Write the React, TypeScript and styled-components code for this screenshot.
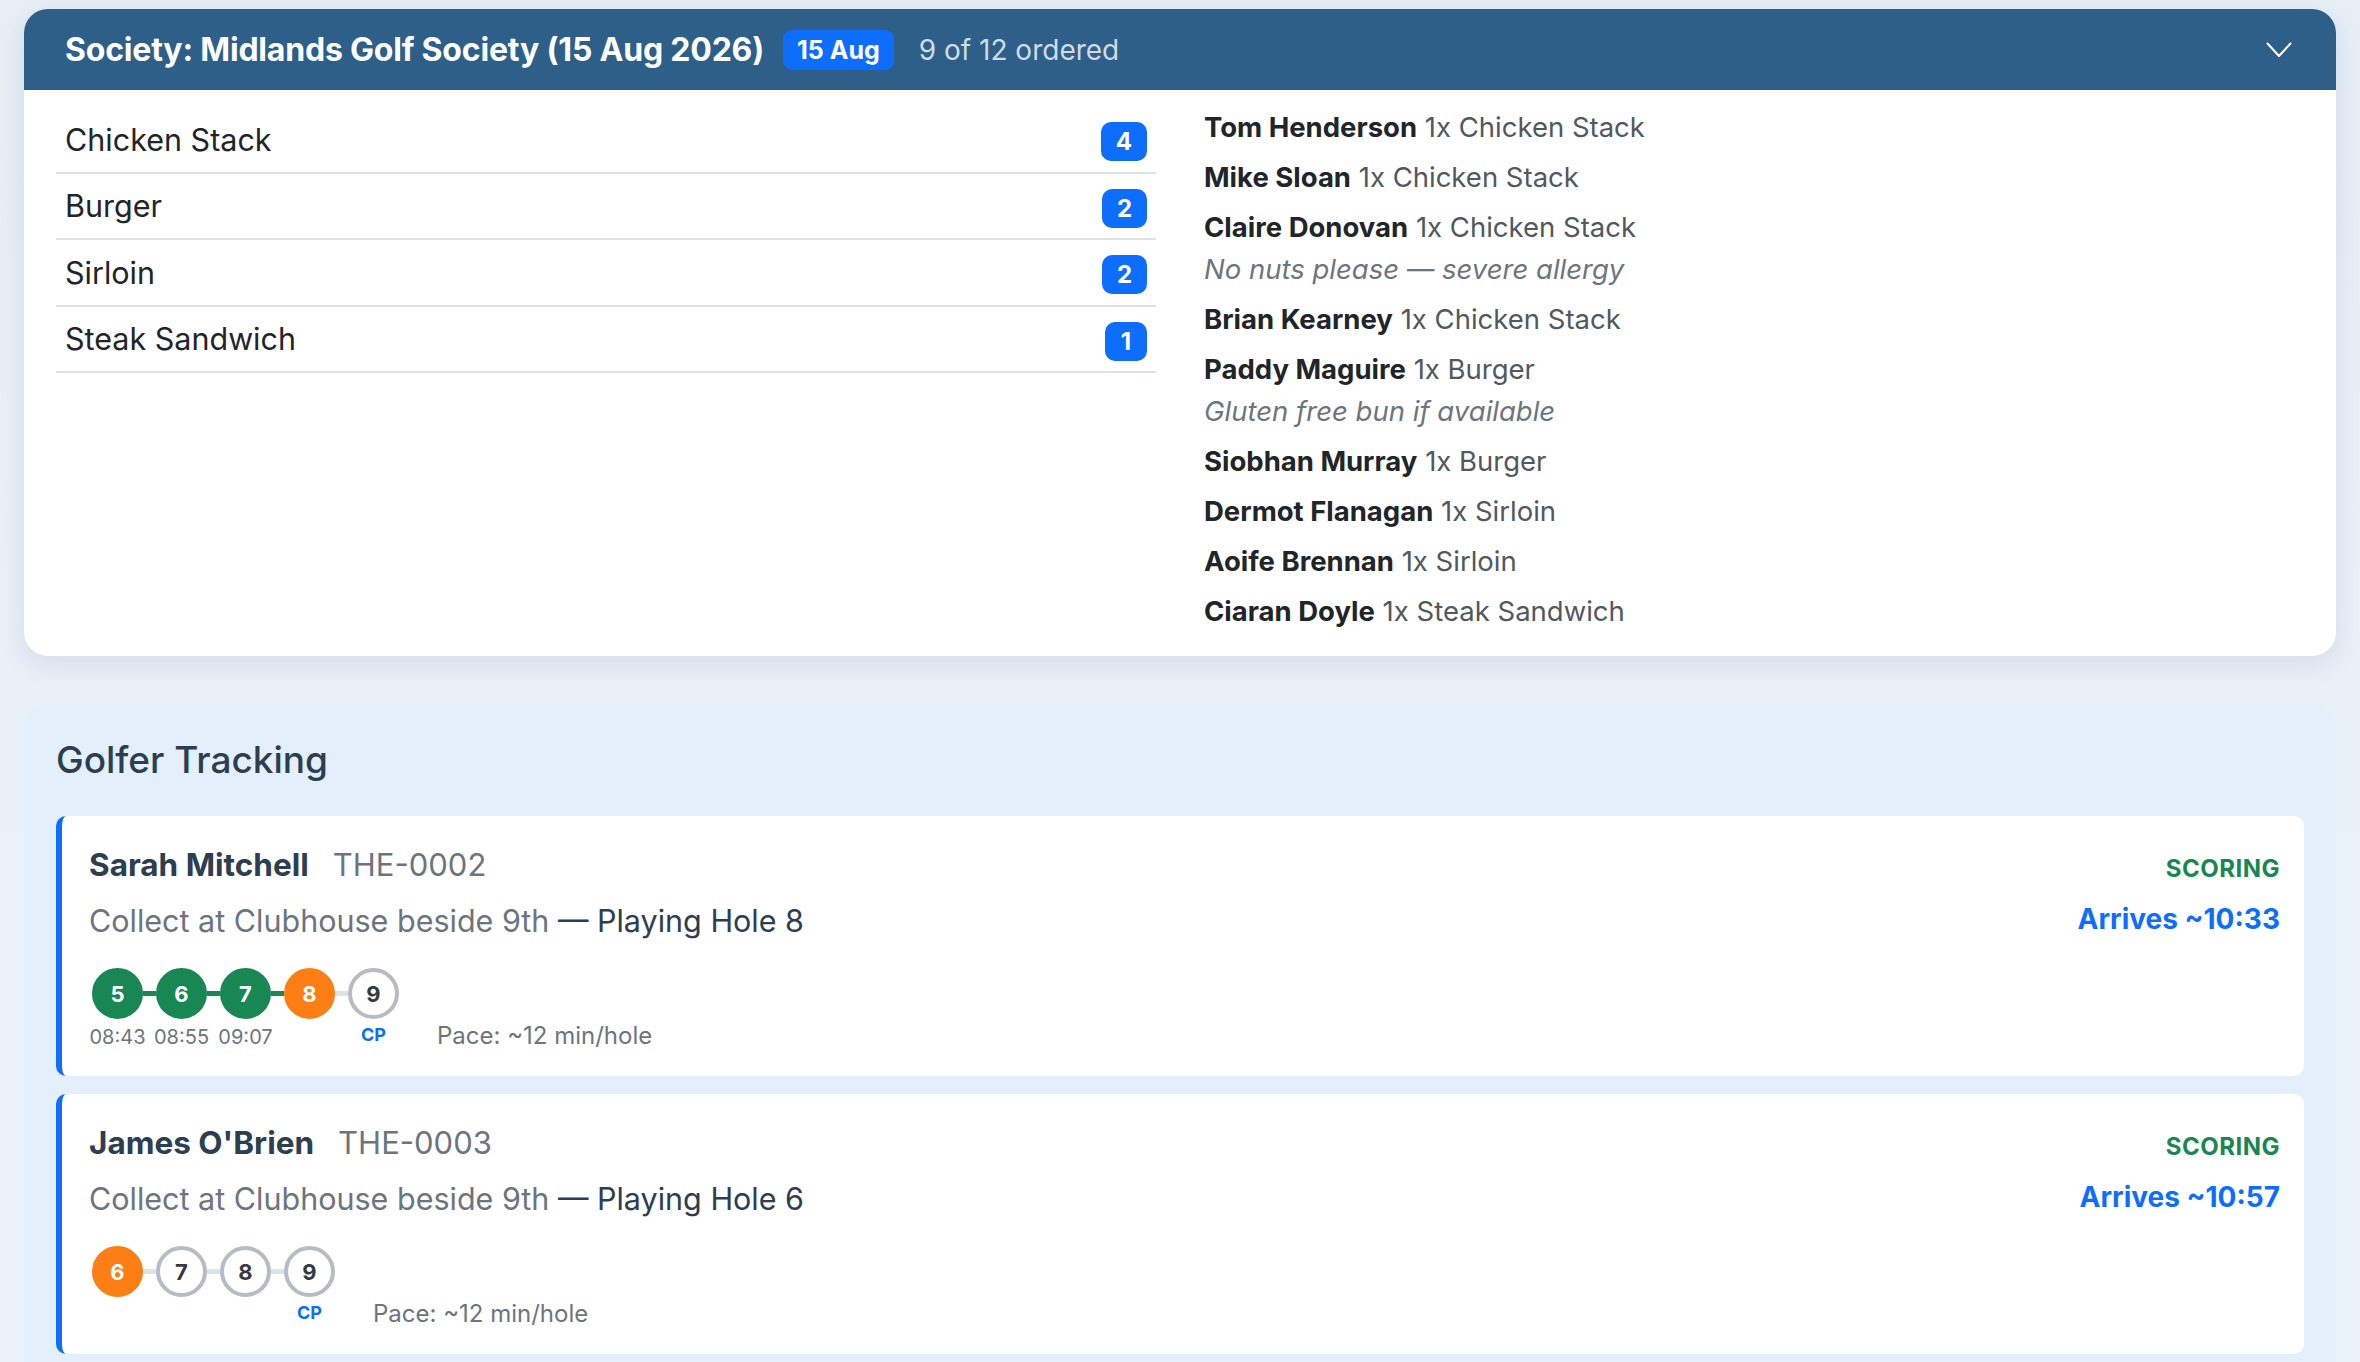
import React from 'react';
import styled, { createGlobalStyle } from 'styled-components';

type HoleState = 'done' | 'current' | 'pending';

interface Hole {
  n: number;
  state: HoleState;
  time?: string;
  cp?: boolean;
}

const menuCounts = [
  { name: 'Chicken Stack', count: 4 },
  { name: 'Burger', count: 2 },
  { name: 'Sirloin', count: 2 },
  { name: 'Steak Sandwich', count: 1 },
];

const orders = [
  { name: 'Tom Henderson', item: '1x Chicken Stack' },
  { name: 'Mike Sloan', item: '1x Chicken Stack' },
  { name: 'Claire Donovan', item: '1x Chicken Stack', note: 'No nuts please — severe allergy' },
  { name: 'Brian Kearney', item: '1x Chicken Stack' },
  { name: 'Paddy Maguire', item: '1x Burger', note: 'Gluten free bun if available' },
  { name: 'Siobhan Murray', item: '1x Burger' },
  { name: 'Dermot Flanagan', item: '1x Sirloin' },
  { name: 'Aoife Brennan', item: '1x Sirloin' },
  { name: 'Ciaran Doyle', item: '1x Steak Sandwich' },
];

const golfers: { name: string; code: string; hole: number; arrives: string; holes: Hole[] }[] = [
  {
    name: 'Sarah Mitchell',
    code: 'THE-0002',
    hole: 8,
    arrives: '10:33',
    holes: [
      { n: 5, state: 'done', time: '08:43' },
      { n: 6, state: 'done', time: '08:55' },
      { n: 7, state: 'done', time: '09:07' },
      { n: 8, state: 'current' },
      { n: 9, state: 'pending', cp: true },
    ],
  },
  {
    name: "James O'Brien",
    code: 'THE-0003',
    hole: 6,
    arrives: '10:57',
    holes: [
      { n: 6, state: 'current' },
      { n: 7, state: 'pending' },
      { n: 8, state: 'pending' },
      { n: 9, state: 'pending', cp: true },
    ],
  },
];

export default function App() {
  return (
    <>
      <GlobalStyle />
      <Page>
        <SocietyCard>
          <CardHeader>
            <HeaderTitle>Society: Midlands Golf Society (15 Aug 2026)</HeaderTitle>
            <DateBadge>15 Aug</DateBadge>
            <OrderedText>9 of 12 ordered</OrderedText>
            <Chevron width="26" height="16" viewBox="0 0 26 16">
              <polyline points="1.5,1.5 13,14 24.5,1.5" fill="none" stroke="#fff" strokeWidth="2" strokeLinecap="round" strokeLinejoin="round" />
            </Chevron>
          </CardHeader>

          <CardBody>
            <ItemList>
              {menuCounts.map((m) => (
                <ItemRow key={m.name}>
                  <span>{m.name}</span>
                  <CountBadge>{m.count}</CountBadge>
                </ItemRow>
              ))}
            </ItemList>

            <OrderList>
              {orders.map((o) => (
                <OrderEntry key={o.name}>
                  <div>
                    <OrderName>{o.name}</OrderName> <OrderItem>{o.item}</OrderItem>
                  </div>
                  {o.note && <OrderNote>{o.note}</OrderNote>}
                </OrderEntry>
              ))}
            </OrderList>
          </CardBody>
        </SocietyCard>

        <TrackingPanel>
          <PanelTitle>Golfer Tracking</PanelTitle>
          {golfers.map((g) => (
            <GolferCard key={g.code}>
              <div>
                <NameRow>
                  <GolferName>{g.name}</GolferName>
                  <GolferCode>{g.code}</GolferCode>
                </NameRow>
                <Location>
                  Collect at Clubhouse beside 9th <strong>— Playing Hole {g.hole}</strong>
                </Location>
                <TrackRow>
                  <Track>
                    {g.holes.map((h, idx) => (
                      <React.Fragment key={h.n}>
                        {idx > 0 && <Connector $done={g.holes[idx - 1].state === 'done'} />}
                        <HoleCol>
                          <HoleDot $state={h.state}>{h.n}</HoleDot>
                          {h.cp ? <CpLabel>CP</CpLabel> : <TimeLabel>{h.time ?? '\u00a0'}</TimeLabel>}
                        </HoleCol>
                      </React.Fragment>
                    ))}
                  </Track>
                  <Pace>Pace: ~12 min/hole</Pace>
                </TrackRow>
              </div>
              <StatusCol>
                <Status>SCORING</Status>
                <Arrives>Arrives ~{g.arrives}</Arrives>
              </StatusCol>
            </GolferCard>
          ))}
        </TrackingPanel>
      </Page>
    </>
  );
}

const GlobalStyle = createGlobalStyle`
  html, body {
    margin: 0;
    padding: 0;
  }
  body {
    font-family: Inter, "Noto Sans", "Liberation Sans", sans-serif;
    background: linear-gradient(180deg, #e6eef6 0%, #eaf2fa 100%);
    color: #212529;
    min-height: 100vh;
  }
  * {
    box-sizing: border-box;
  }
`;

const Page = styled.div`
  padding: 9px 24px 0;
`;

const SocietyCard = styled.section`
  background: #fff;
  border-radius: 24px;
  overflow: hidden;
  box-shadow: 0 8px 26px rgba(40, 60, 90, 0.1);
`;

const CardHeader = styled.header`
  display: flex;
  align-items: center;
  height: 81px;
  padding: 0 44px 0 41px;
  background: #2d5f88;
  color: #fff;
`;

const HeaderTitle = styled.h2`
  margin: 0;
  font-size: 32px;
  font-weight: 700;
  letter-spacing: -0.2px;
`;

const DateBadge = styled.span`
  display: inline-flex;
  align-items: center;
  height: 40px;
  margin-left: 19px;
  padding: 0 14px;
  border-radius: 9px;
  background: #0d6efd;
  font-size: 25px;
  font-weight: 700;
`;

const OrderedText = styled.span`
  margin-left: 25px;
  font-size: 28px;
  color: rgba(255, 255, 255, 0.78);
`;

const Chevron = styled.svg`
  margin-left: auto;
`;

const CardBody = styled.div`
  display: grid;
  grid-template-columns: 1fr 1fr;
  column-gap: 48px;
  padding: 16px 32px 16px;
`;

const ItemList = styled.ul`
  list-style: none;
  margin: 0;
  padding: 1px 0 0;
  align-self: start;
`;

const ItemRow = styled.li`
  display: flex;
  align-items: center;
  justify-content: space-between;
  height: 66.5px;
  padding: 0 9px 0 9px;
  border-bottom: 2px solid #dee2e6;
  font-size: 30.5px;
  color: #212529;
`;

const CountBadge = styled.span`
  display: inline-flex;
  align-items: center;
  justify-content: center;
  min-width: 42px;
  height: 39px;
  margin-top: 5px;
  padding: 0 15px;
  border-radius: 10px;
  background: #0d6efd;
  color: #fff;
  font-size: 24px;
  font-weight: 700;
`;

const OrderList = styled.div`
  display: flex;
  flex-direction: column;
`;

const OrderEntry = styled.div`
  margin-bottom: 8px;
  font-size: 27.5px;
  line-height: 42px;
`;

const OrderName = styled.strong`
  font-weight: 700;
  color: #212529;
`;

const OrderItem = styled.span`
  color: #51585e;
`;

const OrderNote = styled.div`
  font-style: italic;
  color: #6c757d;
`;

const TrackingPanel = styled.section`
  margin-top: 48px;
  padding: 32px;
  border-radius: 24px;
  background: #e3effa;
`;

const PanelTitle = styled.h2`
  margin: 0 0 32px;
  font-size: 37px;
  line-height: 48px;
  font-weight: 500;
  color: #2c3e50;
`;

const GolferCard = styled.article`
  display: flex;
  justify-content: space-between;
  margin-bottom: 18px;
  padding: 24px 24px 26px 27px;
  border-left: 6px solid #0d6efd;
  border-radius: 10px;
  background: #fff;
`;

const NameRow = styled.div`
  display: flex;
  align-items: baseline;
  gap: 24px;
  line-height: 50px;
`;

const GolferName = styled.span`
  font-size: 31.5px;
  font-weight: 700;
  color: #2c3e50;
`;

const GolferCode = styled.span`
  font-size: 31px;
  color: #6c757d;
`;

const Location = styled.div`
  margin-top: 10px;
  font-size: 30.5px;
  line-height: 42px;
  color: #6c757d;

  strong {
    font-weight: 400;
    color: #2c3e50;
  }
`;

const TrackRow = styled.div`
  display: flex;
  align-items: flex-end;
  margin-top: 26px;
  padding-left: 3px;
`;

const Track = styled.div`
  display: flex;
  align-items: flex-start;
`;

const HoleCol = styled.div`
  display: flex;
  flex-direction: column;
  align-items: center;
  width: 51px;
`;

const dotColors: Record<HoleState, { bg: string; border: string; color: string }> = {
  done: { bg: '#198754', border: '#198754', color: '#fff' },
  current: { bg: '#fd7e14', border: '#fd7e14', color: '#fff' },
  pending: { bg: '#fff', border: '#b6bcc3', color: '#343a40' },
};

const HoleDot = styled.div<{ $state: HoleState }>`
  display: flex;
  align-items: center;
  justify-content: center;
  width: 51px;
  height: 51px;
  border-radius: 50%;
  border: 4px solid ${(p) => dotColors[p.$state].border};
  background: ${(p) => dotColors[p.$state].bg};
  color: ${(p) => dotColors[p.$state].color};
  font-size: 22px;
  font-weight: 700;
`;

const Connector = styled.div<{ $done: boolean }>`
  width: 13px;
  height: 5px;
  margin-top: 23px;
  background: ${(p) => (p.$done ? '#198754' : '#dee2e6')};
`;

const TimeLabel = styled.div`
  margin-top: 5px;
  font-size: 20px;
  line-height: 26px;
  color: #6c757d;
  white-space: nowrap;
`;

const CpLabel = styled.div`
  margin-top: 3px;
  font-size: 18px;
  line-height: 26px;
  font-weight: 700;
  color: #0d6efd;
`;

const Pace = styled.div`
  margin-left: 38px;
  font-size: 24px;
  line-height: 28px;
  color: #6c757d;
`;

const StatusCol = styled.div`
  display: flex;
  flex-direction: column;
  align-items: flex-end;
`;

const Status = styled.div`
  font-size: 24px;
  line-height: 50px;
  padding-top: 4px;
  font-weight: 700;
  letter-spacing: 0.5px;
  color: #198754;
`;

const Arrives = styled.div`
  margin-top: 4px;
  font-size: 28px;
  line-height: 42px;
  font-weight: 700;
  color: #0d6efd;
`;
